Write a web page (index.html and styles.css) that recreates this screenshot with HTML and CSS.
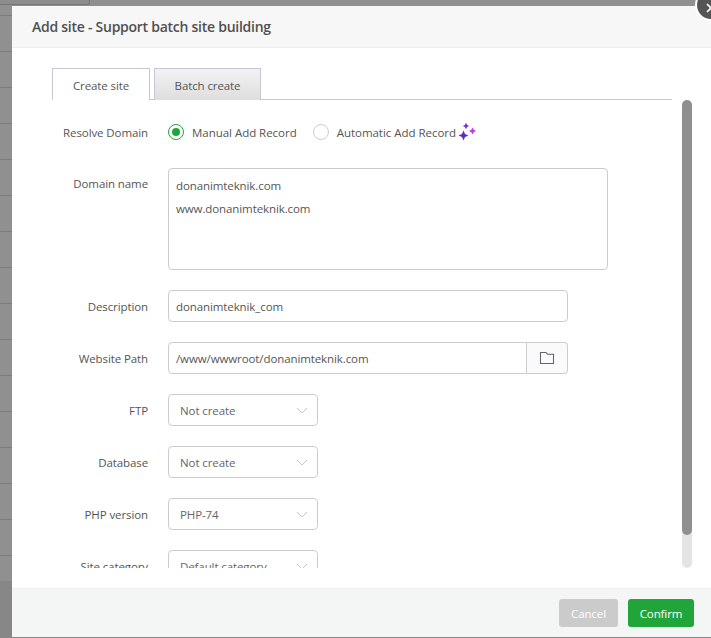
FILE: index.html
```html
<!DOCTYPE html>
<html lang="en">
<head>
<meta charset="utf-8">
<title>Add site</title>
<link rel="stylesheet" href="styles.css">
</head>
<body>
<div class="backdrop">
  <div class="bg-tab"></div>
</div>
<div class="dialog">
  <header class="head">Add site - Support batch site building</header>
  <main class="body">
    <div class="scroll">
      <div class="tabs">
        <div class="tab active">Create site</div>
        <div class="tab">Batch create</div>
      </div>
      <div class="form">
        <div class="row radio-row">
          <label class="lbl">Resolve Domain</label>
          <div class="radios">
            <span class="radio on"></span><span class="rtext">Manual Add Record</span>
            <span class="radio"></span><span class="rtext">Automatic Add Record</span>
            <svg class="spark" width="20" height="20" viewBox="0 0 20 20"><path fill="#5b2fb5" d="M4.5 8.5 L6 12 L9.5 13.5 L6 15 L4.5 18.5 L3 15 L-.5 13.5 L3 12 Z"/><path fill="#6d2fd0" d="M7 .8 L8.1 2.9 L10.2 4 L8.1 5.1 L7 7.2 L5.9 5.1 L3.8 4 L5.9 2.9 Z"/><path fill="#c837e6" d="M13.5 5.5 L14.7 7.8 L17 9 L14.7 10.2 L13.5 12.5 L12.3 10.2 L10 9 L12.3 7.8 Z"/></svg>
          </div>
        </div>
        <div class="row area-row">
          <label class="lbl">Domain name</label>
          <div class="ctl area"><div>donanimteknik.com</div><div>www.donanimteknik.com</div></div>
        </div>
        <div class="row">
          <label class="lbl">Description</label>
          <div class="ctl input w400">donanimteknik_com</div>
        </div>
        <div class="row">
          <label class="lbl">Website Path</label>
          <div class="group w400">
            <div class="ctl input grow">/www/wwwroot/donanimteknik.com</div>
            <div class="addon">
              <svg width="16" height="14" viewBox="0 0 16 14"><path fill="none" stroke="#666" stroke-width="1.1" d="M1.5 1.5H7L8.5 3.2H14.5V12.5H1.5Z"/></svg>
            </div>
          </div>
        </div>
        <div class="row">
          <label class="lbl">FTP</label>
          <div class="ctl select">Not create<svg class="chev" width="12" height="7" viewBox="0 0 12 7"><path fill="none" stroke="#c8c8c8" d="M1 1l5 5 5-5"/></svg></div>
        </div>
        <div class="row">
          <label class="lbl">Database</label>
          <div class="ctl select">Not create<svg class="chev" width="12" height="7" viewBox="0 0 12 7"><path fill="none" stroke="#c8c8c8" d="M1 1l5 5 5-5"/></svg></div>
        </div>
        <div class="row">
          <label class="lbl">PHP version</label>
          <div class="ctl select">PHP-74<svg class="chev" width="12" height="7" viewBox="0 0 12 7"><path fill="none" stroke="#c8c8c8" d="M1 1l5 5 5-5"/></svg></div>
        </div>
        <div class="row">
          <label class="lbl">Site category</label>
          <div class="ctl select">Default category<svg class="chev" width="12" height="7" viewBox="0 0 12 7"><path fill="none" stroke="#c8c8c8" d="M1 1l5 5 5-5"/></svg></div>
        </div>
      </div>
    </div>
    <div class="track"><div class="thumb"></div></div>
  </main>
  <footer class="foot">
    <button class="btn cancel">Cancel</button>
    <button class="btn confirm">Confirm</button>
  </footer>
  <div class="close"><svg class="x" width="12" height="12" viewBox="0 0 12 12"><path fill="none" stroke="#fff" stroke-width="1.6" d="M2 2l8 8M10 2l-8 8"/></svg></div>
</div>
</body>
</html>
```
FILE: styles.css
```css
* { box-sizing: border-box; }
html, body { margin: 0; height: 100%; }
body {
  width: 711px; height: 638px; overflow: hidden; position: relative;
  font-family: "Open Sans", "Noto Sans", sans-serif; font-size: 11.5px; letter-spacing: -0.1px; color: #555;
  background: #878787;
}
.backdrop {
  position: absolute; left: 0; top: 0; right: 0; height: 581px;
  background: repeating-linear-gradient(to bottom, #909090 0, #909090 15px, #7c7c7c 15px, #7c7c7c 16px, #909090 16px, #909090 36px);
}
.bg-tab {
  width: 90px; height: 5px; background: #8d8d8d;
  border: solid #757575; border-width: 0 1px 1px 0; border-radius: 0 0 3px 0;
}
.dialog {
  position: absolute; left: 12px; top: 6px; width: 699px; height: 631px;
  background: #fff; border-radius: 3px 0 0 3px; display: flex; flex-direction: column;
}
.head {
  height: 42px; padding: 0 20px; line-height: 41px; background: #f7f7f7;
  border-bottom: 1px solid #eeeeee; font-size: 14px; letter-spacing: -0.26px; font-weight: 600; color: #505050;
}
.body { flex: 1; min-height: 0; display: flex; padding: 20px 0 20px 40px; }
.scroll { width: 620px; overflow: hidden; }
.tabs { display: flex; gap: 4px; height: 32px; border-bottom: 1px solid #c9c5d6; }
.tab {
  height: 32px; line-height: 34px; border: 1px solid #c9c5d6; border-bottom: 0; text-align: center; white-space: nowrap;
  background: linear-gradient(#f2f2f2, #dedede);
}
.tab.active { width: 98px; background: #fff; }
.tab:not(.active) { width: 107px; }
.form { display: flex; flex-direction: column; }
.row { display: flex; align-items: center; margin-top: 20px; height: 32px; }
.radio-row { margin-top: 16px; }
.area-row { align-items: flex-start; height: 102px; }
.area-row .lbl { padding-top: 8px; }
.lbl { width: 96px; text-align: right; margin-right: 20px; flex: none; }
.radios { display: flex; align-items: center; }
.radio { width: 16px; height: 16px; border: 1px solid #ccc; border-radius: 50%; margin-right: 8px; background: #fff; position: relative; }
.radio.on { border-color: #20a53a; }
.radio.on::after { content: ""; position: absolute; left: 3px; top: 3px; width: 8px; height: 8px; border-radius: 50%; background: #20a53a; }
.rtext { margin-right: 16px; letter-spacing: -0.03px; }
.radios .rtext:last-of-type { margin-right: 3px; }
.ctl { border: 1px solid #ccc; border-radius: 4px; background: #fff; }
.area { width: 440px; height: 102px; padding: 5px 7px; line-height: 23px; }
.input { height: 32px; line-height: 31px; padding: 0 7px; }
.w400 { width: 400px; }
.group { display: flex; }
.grow { flex: 1; border-radius: 4px 0 0 4px; }
.addon {
  width: 41px; height: 32px; border: 1px solid #ccc; border-left: 0; border-radius: 0 4px 4px 0;
  background: #fafafc; display: flex; align-items: center; justify-content: center;
}
.select { width: 150px; height: 32px; line-height: 31px; padding: 0 11px; position: relative; color: #666; }
.chev { position: absolute; right: 9px; top: 12px; }
.track { width: 10px; height: 468px; margin: 32px 0 0 10px; background: #e4e4e4; border-radius: 5px; flex: none; }
.thumb { height: 435px; background: #8f8f8f; border-radius: 5px; }
.foot {
  height: 49px; background: #f4f6f6; border-top: 1px solid #eef0f0; display: flex;
  justify-content: flex-end; align-items: center; padding-right: 17px; gap: 10px;
}
.btn { font: inherit; letter-spacing: inherit; height: 28px; border: 0; border-radius: 3px; color: #fff; padding: 0; }
.cancel { width: 59px; background: #cbcbcb; }
.confirm { width: 66px; background: #20a53a; }
.close {
  position: absolute; right: -16px; top: -17px; width: 32px; height: 32px; border-radius: 50%;
  background: #555; border: 2px solid #fff; display: flex; align-items: center; justify-content: center;
}
.x { margin-top: 6px; }
```
